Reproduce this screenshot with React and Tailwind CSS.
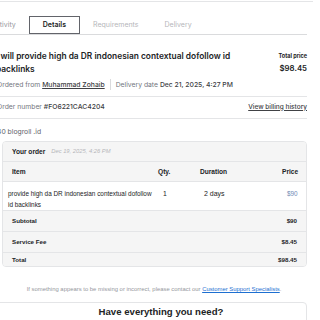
export default function App() {
  const tabs = ['Activity', 'Details', 'Requirements', 'Delivery']

  return (
    <div className="w-[320px] h-[320px] overflow-hidden bg-white text-[#222325] font-['Inter',sans-serif]">
      <div className="w-[310px] -ml-[3px]">

        {/* top edge */}
        <div className="h-[2px] border-b border-[#e4e5e7] -mr-[6px]" />

        {/* tabs */}
        <div className="flex items-end h-[33px] border-b border-[#dadbdd]">
          <div className="flex -ml-[19px]">
            {tabs.map(t => (
              <div key={t}
                className={t === 'Details'
                  ? 'h-[18px] px-[13px] flex items-center border border-[#62646a] -mb-px text-[7px] font-semibold text-[#222325]'
                  : t === 'Activity'
                    ? 'h-[18px] px-[13px] flex items-center text-[7px] text-[#95979d]'
                    : 'h-[18px] px-[13px] flex items-center text-[7px] text-[#b5b6ba]'}>
                {t}
              </div>
            ))}
          </div>
        </div>

        {/* title + price */}
        <div className="flex justify-between pt-[15px]">
          <h1 className="w-[245px] -ml-[1px] text-[8.4px] leading-[13px] font-semibold">
            I will provide high da DR indonesian contextual dofollow id backlinks
          </h1>
          <div className="text-right pt-[1px]">
            <div className="text-[5.5px] font-bold leading-[10px]">Total price</div>
            <div className="text-[7.8px] font-semibold leading-[14px]">$98.45</div>
          </div>
        </div>

        {/* meta */}
        <div className="flex items-center mt-[3px] text-[6.8px] leading-[10px]">
          <span className="text-[#74767e]">Ordered from&nbsp;</span>
          <span className="underline text-[#404145] font-medium">Muhammad Zohaib</span>
          <span className="h-[11px] border-l border-[#dadbdd] mx-[5px]" />
          <span className="text-[#74767e]">Delivery date&nbsp;</span>
          <span className="text-[#404145] font-medium">Dec 21, 2025, 4:27 PM</span>
        </div>

        <div className="border-b border-[#e4e5e7] mt-[6px]" />

        <div className="flex items-center justify-between h-[21px]">
          <span className="text-[6.8px] text-[#74767e]">Order number <span className="text-[#404145] font-medium">#FO6221CAC4204</span></span>
          <span className="text-[6.5px] underline text-[#404145] font-medium">View billing history</span>
        </div>

        <div className="border-b border-[#e4e5e7]" />

        <div className="mt-[8px] text-[6.8px] leading-[10px] text-[#62646a]">40 blogroll .id</div>

        {/* order card */}
        <div className="ml-[5px] mt-[4px] rounded-[4px] border border-[#e4e5e7] overflow-hidden font-['Liberation_Sans',Arial,sans-serif] text-[6.4px]">
          <div className="flex items-center gap-[6px] h-[20px] pl-[9px] bg-[#f5f5f5] border-b border-[#e4e5e7]">
            <span className="font-bold text-[6.6px]">Your order</span>
            <span className="italic text-[5.8px] text-[#b5b6ba]">Dec 19, 2025, 4:26 PM</span>
          </div>
          <div className="grid grid-cols-[155px_42px_82px_1fr] items-center h-[20px] bg-[#f5f5f5] border-b border-[#e4e5e7] font-bold text-[6.6px]">
            <span className="pl-[9px]">Item</span>
            <span>Qty.</span>
            <span>Duration</span>
            <span>Price</span>
          </div>
          <div className="grid grid-cols-[155px_42px_82px_1fr] items-start h-[28px] pt-[6px] bg-white">
            <span className="leading-[11px] pl-[5px] pr-[6px]">provide high da DR indonesian contextual dofollow id backlinks</span>
            <span className="pl-[5px] text-[6.8px] leading-[11px]">1</span>
            <span className="pl-[4px] text-[7px] leading-[11px]">2 days</span>
            <span className="pl-[5px] text-[6.4px] leading-[11px] text-[#6f8bb5]">$90</span>
          </div>
          {[
            ['Subtotal', '$90', 'h-[21px]'],
            ['Service Fee', '$8.45', 'h-[21px]'],
            ['Total', '$98.45', 'h-[14px]'],
          ].map(([label, value, h]) => (
            <div key={label} className={`flex items-center justify-between ${h} px-[9px] bg-[#f5f5f5] border-t border-[#e4e5e7] font-bold text-[6.2px]`}>
              <span>{label}</span>
              <span>{value}</span>
            </div>
          ))}
        </div>

        <p className="mt-[18px] ml-[4px] text-center font-['Liberation_Sans',Arial,sans-serif] text-[5.9px] leading-[8px] text-[#95979d]">
          If something appears to be missing or incorrect, please contact our{' '}
          <span className="underline text-[#1d6fd1]">Customer Support Specialists</span>.
        </p>

        <div className="-ml-[2px] mt-[9px] h-[30px] border border-[#e4e5e7] rounded-[4px] pt-[2px] pl-[20px] text-center text-[9.6px] font-bold font-['Liberation_Sans',Arial,sans-serif]">
          Have everything you need?
        </div>
      </div>
    </div>
  )
}
